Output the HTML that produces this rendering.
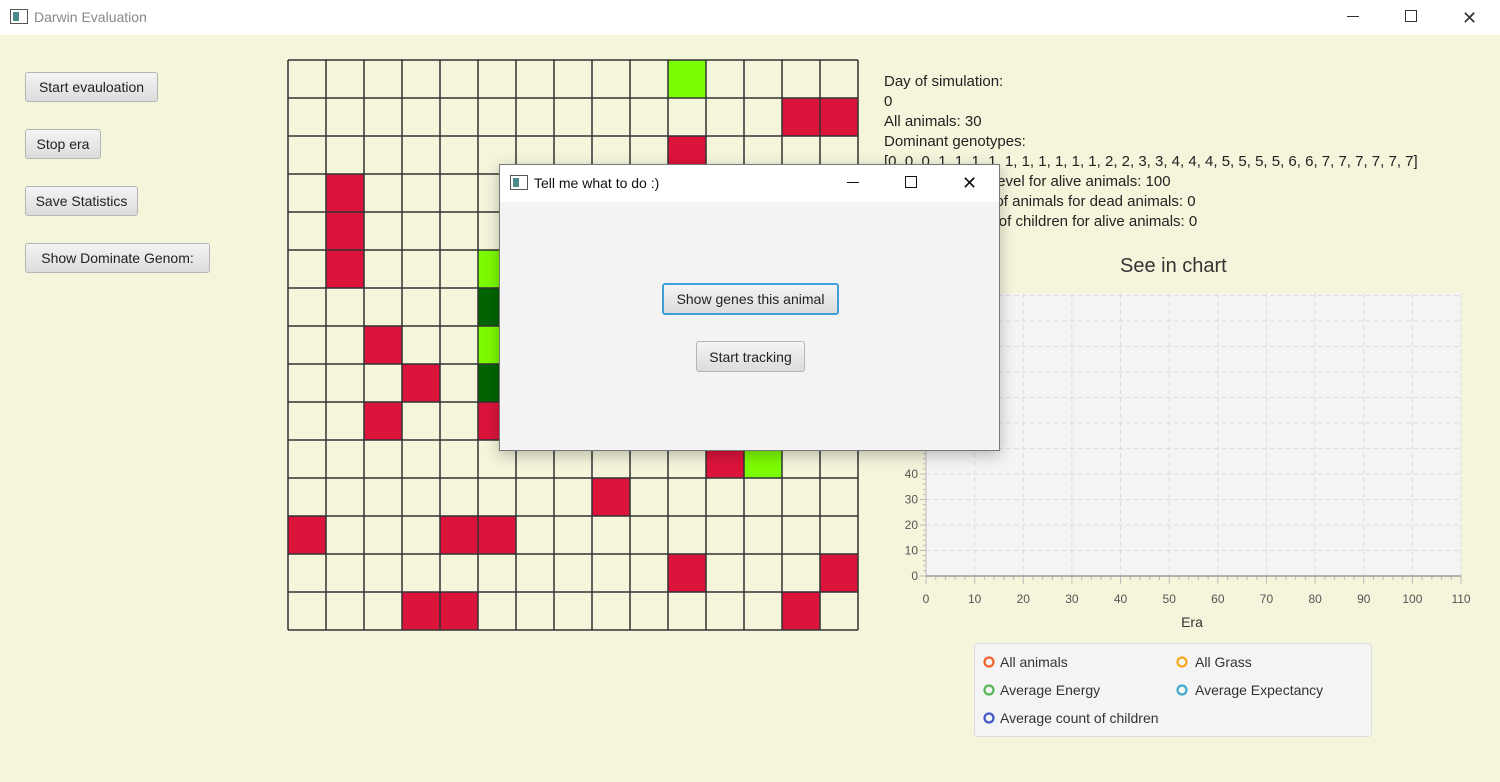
<!DOCTYPE html>
<html><head><style>
body{margin:0;width:1500px;height:782px;background:#f5f5dc;font-family:"Liberation Sans",sans-serif;position:relative;overflow:hidden}
.tb{position:absolute;left:0;top:0;width:1500px;height:35px;background:#fff}
.abs{position:absolute}
.btn{position:absolute;height:30px;box-sizing:border-box;border:1px solid #b5b5b5;border-radius:3px;background:linear-gradient(#f4f4f4,#dcdcdc);font-size:14px;color:#222;display:flex;align-items:center;justify-content:center}
.stat{position:absolute;left:884px;font-size:15px;color:#222}
</style></head><body>
<div class="tb">
<svg class="abs" style="left:10px;top:9px" width="18" height="16"><rect x="0.5" y="0.5" width="17" height="14" fill="#fff" stroke="#555"/><rect x="3" y="3" width="6" height="9" fill="#4a8a8a"/></svg>
<div class="abs" style="left:34px;top:9px;font-size:14px;color:#888">Darwin Evaluation</div>
<div class="abs" style="left:1347px;top:16px;width:12px;height:1px;background:#333"></div>
<div class="abs" style="left:1405px;top:10px;width:10px;height:10px;border:1px solid #333"></div>
<div class="abs" style="left:1462px;top:8px;font-size:18px;color:#333">✕</div>
</div>
<div class="btn" style="left:25px;top:72px;width:133px">Start evauloation</div>
<div class="btn" style="left:25px;top:129px;width:76px">Stop era</div>
<div class="btn" style="left:25px;top:186px;width:113px">Save Statistics</div>
<div class="btn" style="left:25px;top:243px;width:185px">Show Dominate Genom:</div>
<svg class="abs" style="left:287px;top:59px" width="573" height="573" id="g"></svg>
<div class="stat" style="top:73px">Day of simulation:</div>
<div class="stat" style="top:93px">0</div>
<div class="stat" style="top:113px">All animals: 30</div>
<div class="stat" style="top:133px">Dominant genotypes:</div>
<div class="stat" style="top:153px">[0, 0, 0, 1, 1, 1, 1, 1, 1, 1, 1, 1, 1, 2, 2, 3, 3, 4, 4, 4, 5, 5, 5, 5, 6, 6, 7, 7, 7, 7, 7, 7]</div>
<div class="stat" style="top:173px">Average energy level for alive animals: 100</div>
<div class="stat" style="top:193px">Average lifetime of animals for dead animals: 0</div>
<div class="stat" style="top:213px">Average number of children for alive animals: 0</div>
<div class="abs" style="left:1120px;top:255px;font-size:20px;color:#333">See in chart</div>
<svg class="abs" style="left:880px;top:285px" width="600" height="350" id="c"></svg>
<div class="abs" style="left:974px;top:643px;width:398px;height:94px;box-sizing:border-box;border:1px solid #ddd;border-radius:4px;background:#f4f4f4;font-size:14px;color:#333">
<svg class="abs" style="left:8px;top:12px" width="12" height="12"><circle cx="6" cy="6" r="4.5" fill="none" stroke="#f3622d" stroke-width="2.2"/></svg><div class="abs" style="left:25px;top:10px">All animals</div>
<svg class="abs" style="left:201px;top:12px" width="12" height="12"><circle cx="6" cy="6" r="4.5" fill="none" stroke="#fba71b" stroke-width="2.2"/></svg><div class="abs" style="left:220px;top:10px">All Grass</div>
<svg class="abs" style="left:8px;top:40px" width="12" height="12"><circle cx="6" cy="6" r="4.5" fill="none" stroke="#57b757" stroke-width="2.2"/></svg><div class="abs" style="left:25px;top:38px">Average Energy</div>
<svg class="abs" style="left:201px;top:40px" width="12" height="12"><circle cx="6" cy="6" r="4.5" fill="none" stroke="#41a9c9" stroke-width="2.2"/></svg><div class="abs" style="left:220px;top:38px">Average Expectancy</div>
<svg class="abs" style="left:8px;top:68px" width="12" height="12"><circle cx="6" cy="6" r="4.5" fill="none" stroke="#4258c9" stroke-width="2.2"/></svg><div class="abs" style="left:25px;top:66px">Average count of children</div>
</div>
<div class="abs" style="left:499px;top:164px;width:501px;height:287px;box-sizing:border-box;border:1px solid #777;background:#f3f3f3;box-shadow:0 4px 14px rgba(0,0,0,.25)">
<div class="abs" style="left:0;top:0;width:499px;height:37px;background:#fff"></div>
<svg class="abs" style="left:10px;top:10px" width="18" height="16"><rect x="0.5" y="0.5" width="17" height="14" fill="#fff" stroke="#555"/><rect x="3" y="3" width="6" height="9" fill="#4a8a8a"/></svg>
<div class="abs" style="left:34px;top:10px;font-size:14px;color:#111">Tell me what to do :)</div>
<div class="abs" style="left:347px;top:17px;width:12px;height:1px;background:#111"></div>
<div class="abs" style="left:405px;top:11px;width:10px;height:10px;border:1px solid #111"></div>
<div class="abs" style="left:462px;top:8px;font-size:18px;color:#111">✕</div>
<div class="btn" style="left:162px;top:118px;width:177px;height:32px;border:2px solid #3fa0d8">Show genes this animal</div>
<div class="btn" style="left:196px;top:176px;width:109px;height:31px">Start tracking</div>
</div>
<script>
var g=document.getElementById('g'),s='';
var cells={"10,0":"#7cfc00","13,1":"r","14,1":"r","10,2":"r","1,3":"r","1,4":"r","1,5":"r","5,5":"#7cfc00","5,6":"#006400","5,7":"#7cfc00","5,8":"#006400","5,9":"r","2,7":"r","3,8":"r","2,9":"r","11,10":"r","12,10":"#7cfc00","8,11":"r","0,12":"r","4,12":"r","5,12":"r","10,13":"r","14,13":"r","3,14":"r","4,14":"r","13,14":"r"};
for(var k in cells){var p=k.split(','),c=cells[k]=="r"?"#dc143c":cells[k];s+='<rect x="'+(1+38*p[0])+'" y="'+(1+38*p[1])+'" width="38" height="38" fill="'+c+'"/>';}
for(var i=0;i<=15;i++){s+='<line x1="'+(1+38*i)+'" y1="1" x2="'+(1+38*i)+'" y2="571" stroke="#333" stroke-width="1.5"/><line y1="'+(1+38*i)+'" x1="1" y2="'+(1+38*i)+'" x2="571" stroke="#333" stroke-width="1.5"/>';}
g.innerHTML=s;
var C=document.getElementById('c'),t='';
var x0=46,x1=581,y0=291,yt=8;
t+='<rect x="'+x0+'" y="'+yt+'" width="'+(x1-x0)+'" height="'+(y0-yt)+'" fill="#f4f4f4"/>';
for(var i=1;i<=11;i++){var x=x0+i*48.64;t+='<line x1="'+x+'" y1="'+yt+'" x2="'+x+'" y2="'+y0+'" stroke="#ddd" stroke-dasharray="5,3"/>';}
for(var i=1;i<=11;i++){var y=y0-i*25.5;t+='<line x1="'+x0+'" y1="'+y+'" x2="'+x1+'" y2="'+y+'" stroke="#ddd" stroke-dasharray="5,3"/>';if(i<=4)t+='<text x="'+(x0-8)+'" y="'+(y+4)+'" font-size="12" fill="#555" text-anchor="end" font-family="Liberation Sans">'+(i*10)+'</text>';}
t+='<text x="'+(x0-8)+'" y="'+(y0+4)+'" font-size="12" fill="#555" text-anchor="end" font-family="Liberation Sans">0</text>';
for(var i=0;i<=55;i++){var y=y0-i*5.1;t+='<line x1="'+(x0-(i%5?3:6))+'" y1="'+y+'" x2="'+x0+'" y2="'+y+'" stroke="#bbb"/>';}
for(var i=0;i<=55;i++){var x=x0+i*9.728;t+='<line x1="'+x+'" y1="'+y0+'" x2="'+x+'" y2="'+(y0+(i%5?4:8))+'" stroke="#bbb"/>';}
for(var i=0;i<=11;i++){t+='<text x="'+(x0+i*48.64)+'" y="'+(y0+27)+'" font-size="12" fill="#555" text-anchor="middle" font-family="Liberation Sans">'+(i*10)+'</text>';}
t+='<line x1="'+x0+'" y1="'+y0+'" x2="'+x1+'" y2="'+y0+'" stroke="#999" stroke-width="1.5"/><line x1="'+x0+'" y1="'+yt+'" x2="'+x0+'" y2="'+y0+'" stroke="#bbb"/>';
t+='<text x="312" y="342" font-size="14" fill="#333" text-anchor="middle" font-family="Liberation Sans">Era</text>';
C.innerHTML=t;
</script>
</body></html>
